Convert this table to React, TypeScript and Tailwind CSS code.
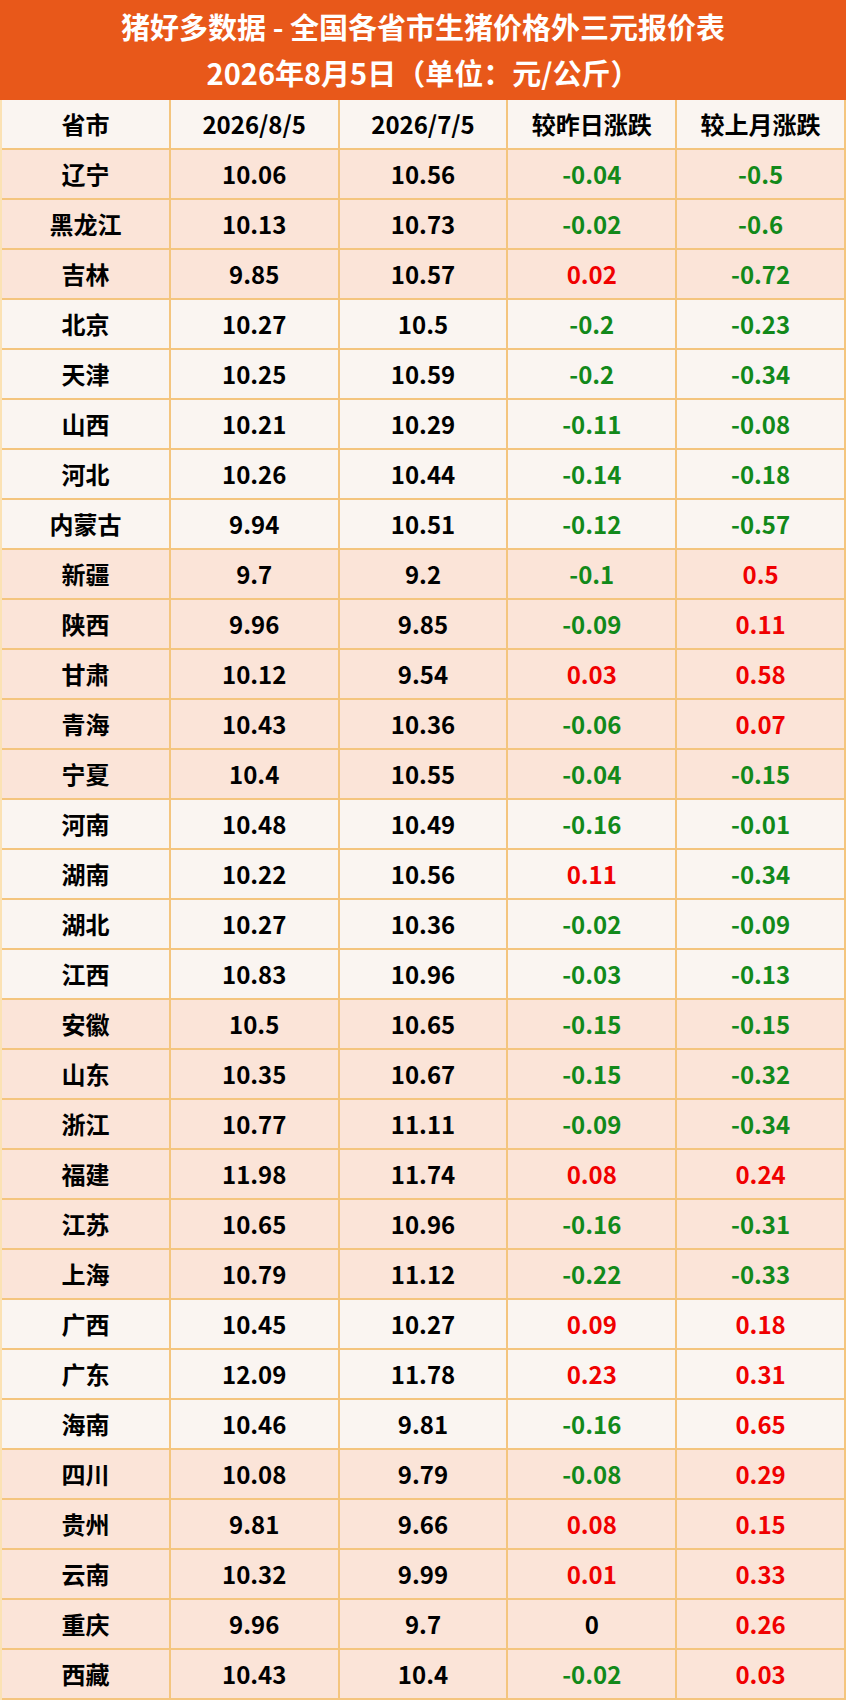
type Row = {
  name: string;
  today: string;
  lastMonth: string;
  dayChange: string;
  monthChange: string;
  shaded: boolean;
};

// 每个大区交替底色：东北/西北/华东/西南 偏粉，其余偏白
const groups: { shaded: boolean; rows: string[][] }[] = [
  {
    shaded: true,
    rows: [
      ["辽宁", "10.06", "10.56", "-0.04", "-0.5"],
      ["黑龙江", "10.13", "10.73", "-0.02", "-0.6"],
      ["吉林", "9.85", "10.57", "0.02", "-0.72"],
    ],
  },
  {
    shaded: false,
    rows: [
      ["北京", "10.27", "10.5", "-0.2", "-0.23"],
      ["天津", "10.25", "10.59", "-0.2", "-0.34"],
      ["山西", "10.21", "10.29", "-0.11", "-0.08"],
      ["河北", "10.26", "10.44", "-0.14", "-0.18"],
      ["内蒙古", "9.94", "10.51", "-0.12", "-0.57"],
    ],
  },
  {
    shaded: true,
    rows: [
      ["新疆", "9.7", "9.2", "-0.1", "0.5"],
      ["陕西", "9.96", "9.85", "-0.09", "0.11"],
      ["甘肃", "10.12", "9.54", "0.03", "0.58"],
      ["青海", "10.43", "10.36", "-0.06", "0.07"],
      ["宁夏", "10.4", "10.55", "-0.04", "-0.15"],
    ],
  },
  {
    shaded: false,
    rows: [
      ["河南", "10.48", "10.49", "-0.16", "-0.01"],
      ["湖南", "10.22", "10.56", "0.11", "-0.34"],
      ["湖北", "10.27", "10.36", "-0.02", "-0.09"],
      ["江西", "10.83", "10.96", "-0.03", "-0.13"],
    ],
  },
  {
    shaded: true,
    rows: [
      ["安徽", "10.5", "10.65", "-0.15", "-0.15"],
      ["山东", "10.35", "10.67", "-0.15", "-0.32"],
      ["浙江", "10.77", "11.11", "-0.09", "-0.34"],
      ["福建", "11.98", "11.74", "0.08", "0.24"],
      ["江苏", "10.65", "10.96", "-0.16", "-0.31"],
      ["上海", "10.79", "11.12", "-0.22", "-0.33"],
    ],
  },
  {
    shaded: false,
    rows: [
      ["广西", "10.45", "10.27", "0.09", "0.18"],
      ["广东", "12.09", "11.78", "0.23", "0.31"],
      ["海南", "10.46", "9.81", "-0.16", "0.65"],
    ],
  },
  {
    shaded: true,
    rows: [
      ["四川", "10.08", "9.79", "-0.08", "0.29"],
      ["贵州", "9.81", "9.66", "0.08", "0.15"],
      ["云南", "10.32", "9.99", "0.01", "0.33"],
      ["重庆", "9.96", "9.7", "0", "0.26"],
      ["西藏", "10.43", "10.4", "-0.02", "0.03"],
    ],
  },
];

const rows: Row[] = groups.flatMap((g) =>
  g.rows.map(([name, today, lastMonth, dayChange, monthChange]) => ({
    name,
    today,
    lastMonth,
    dayChange,
    monthChange,
    shaded: g.shaded,
  }))
);

const changeColor = (v: string) => {
  const n = parseFloat(v);
  if (n > 0) return "text-[#f00000]";
  if (n < 0) return "text-[#12891a]";
  return "text-black";
};

const Cell = ({ children, className = "" }: { children: React.ReactNode; className?: string }) => (
  <div className={`flex items-center justify-center border-r-2 border-[#f4c57e] ${className}`}>
    {children}
  </div>
);

export default function App() {
  return (
    <div
      className="w-[846px] bg-[#faf5f1] font-bold"
      style={{ fontFamily: '"Noto Sans CJK SC", "Noto Sans", sans-serif' }}
    >
      {/* 标题 */}
      <div className="flex h-[100px] flex-col bg-[#e8581a] text-[29px] text-white">
        <div className="flex h-[50px] items-center justify-center pt-1">
          猪好多数据 - 全国各省市生猪价格外三元报价表
        </div>
        <div className="flex h-[50px] items-center justify-center pb-1">
          2026年8月5日（单位：元/公斤）
        </div>
      </div>

      <div className="border-l-2 border-[#fbe2b4] text-[24px] text-black">
        <div className="grid h-[50px] grid-cols-5 border-b-2 border-[#f4c57e] bg-[#faf5f1]">
          <Cell>省市</Cell>
          <Cell>2026/8/5</Cell>
          <Cell>2026/7/5</Cell>
          <Cell>较昨日涨跌</Cell>
          <Cell>较上月涨跌</Cell>
        </div>

        {rows.map((r) => (
          <div
            key={r.name}
            className={`grid h-[50px] grid-cols-5 border-b-2 border-[#f4c57e] ${
              r.shaded ? "bg-[#fbe4d8]" : "bg-[#faf5f1]"
            }`}
          >
            <Cell>{r.name}</Cell>
            <Cell>{r.today}</Cell>
            <Cell>{r.lastMonth}</Cell>
            <Cell className={changeColor(r.dayChange)}>{r.dayChange}</Cell>
            <Cell className={changeColor(r.monthChange)}>{r.monthChange}</Cell>
          </div>
        ))}
      </div>
    </div>
  );
}
